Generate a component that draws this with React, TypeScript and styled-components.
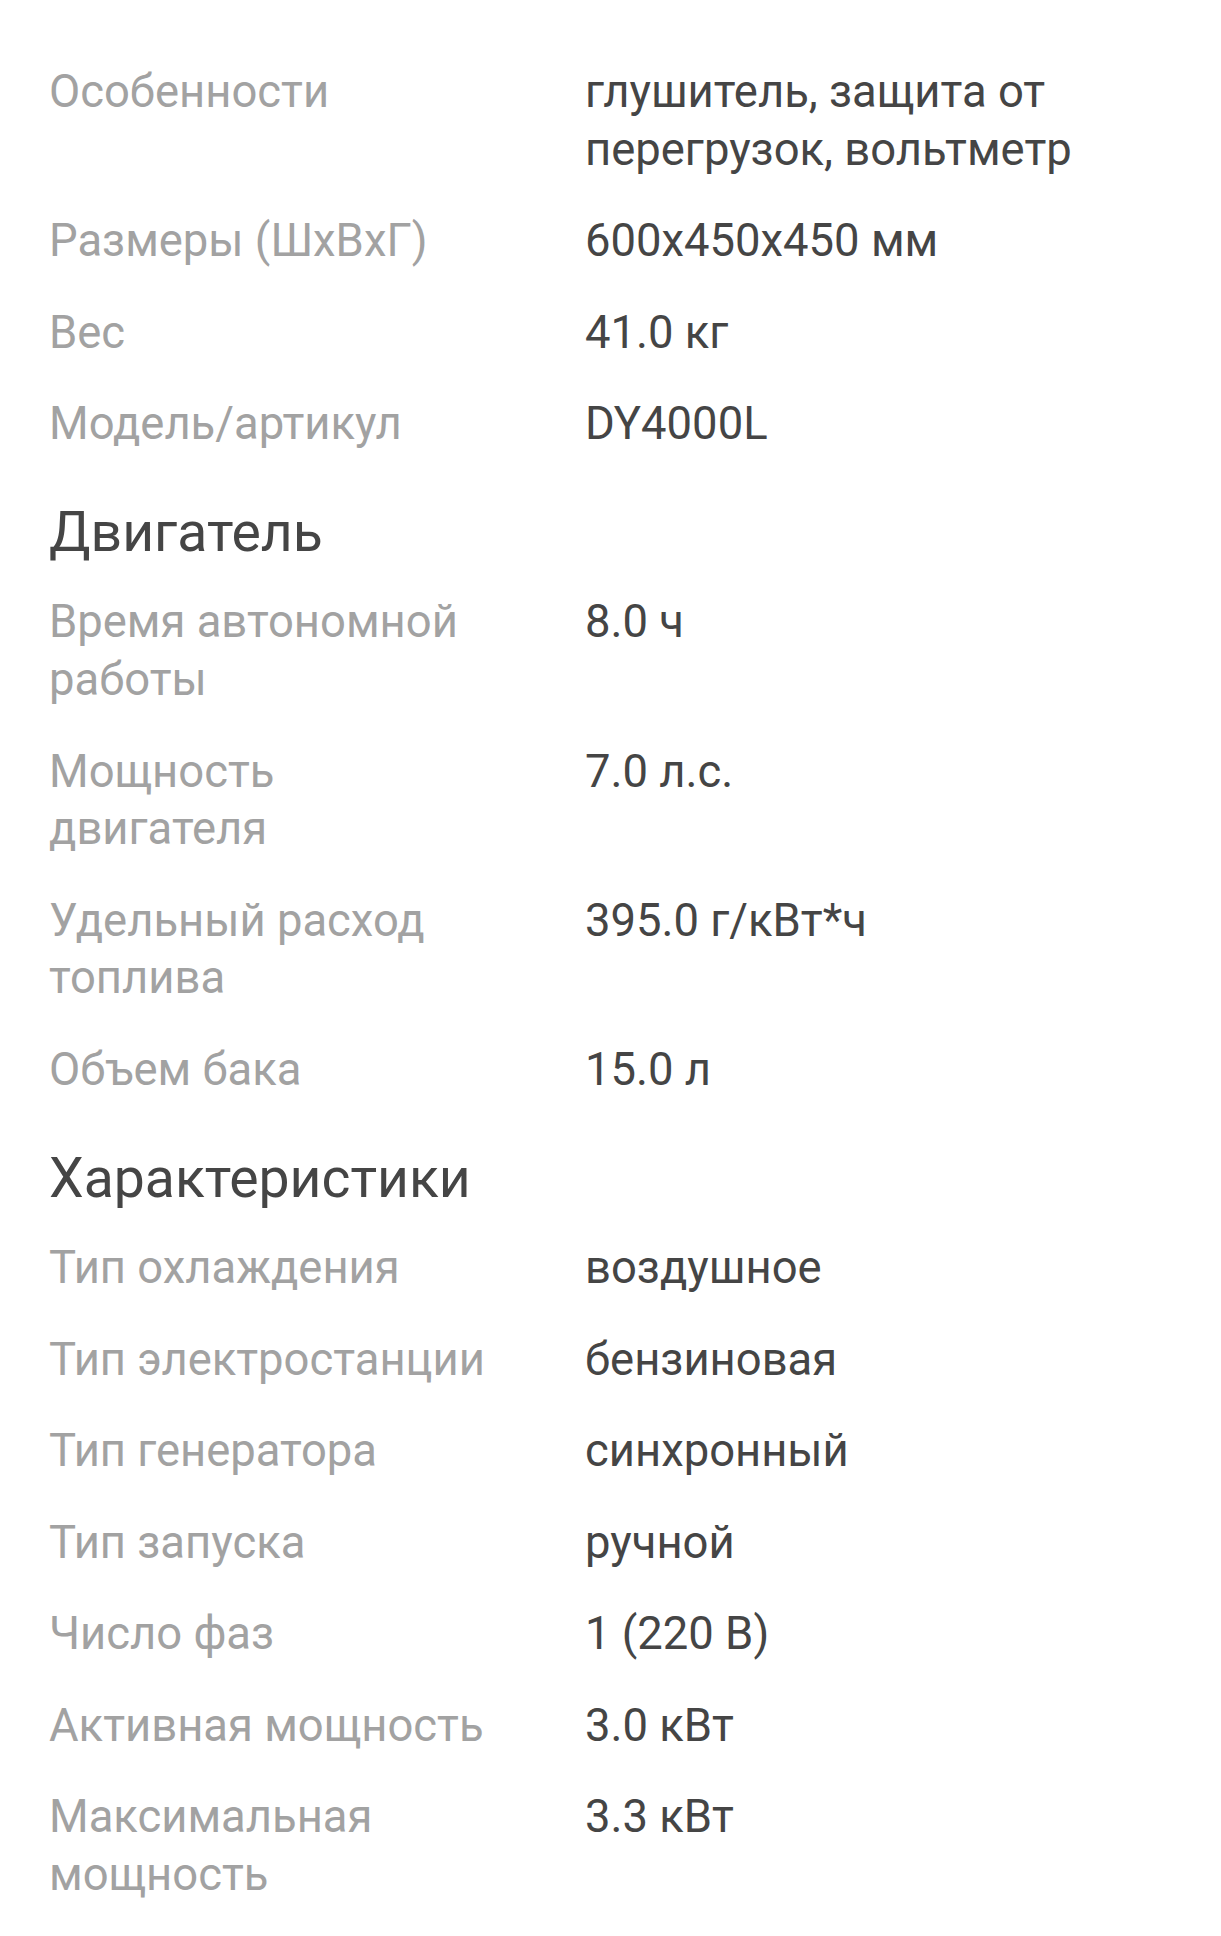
import React from "react";
import styled, { createGlobalStyle } from "styled-components";

const GlobalStyle = createGlobalStyle`
  html, body {
    margin: 0;
    padding: 0;
    background: #ffffff;
  }
  body {
    font-family: Roboto, "Noto Sans", Arial, sans-serif;
    -webkit-font-smoothing: antialiased;
  }
`;

const Page = styled.div`
  padding: 46px 49px 40px 49px;
  display: flex;
  flex-direction: column;
`;

const Section = styled.section`
  display: flex;
  flex-direction: column;
`;

const SectionTitle = styled.h2`
  margin: 29.5px 0 9.7px 0;
  font-size: 55.3px;
  line-height: 67.2px;
  font-weight: 400;
  color: #454545;
`;

const Row = styled.div`
  display: grid;
  grid-template-columns: 445px 1fr;
  column-gap: 91px;
  padding: 17px 0;
  font-size: 45.4px;
  line-height: 57.6px;
`;

const Label = styled.div`
  color: #a2a2a2;
`;

const Value = styled.div`
  color: #454545;
`;

type Spec = [string, string];

const sections: { title?: string; rows: Spec[] }[] = [
  {
    rows: [
      ["Особенности", "глушитель, защита от перегрузок, вольтметр"],
      ["Размеры (ШxВxГ)", "600x450x450 мм"],
      ["Вес", "41.0 кг"],
      ["Модель/артикул", "DY4000L"],
    ],
  },
  {
    title: "Двигатель",
    rows: [
      ["Время автономной работы", "8.0 ч"],
      ["Мощность двигателя", "7.0 л.с."],
      ["Удельный расход топлива", "395.0 г/кВт*ч"],
      ["Объем бака", "15.0 л"],
    ],
  },
  {
    title: "Характеристики",
    rows: [
      ["Тип охлаждения", "воздушное"],
      ["Тип электростанции", "бензиновая"],
      ["Тип генератора", "синхронный"],
      ["Тип запуска", "ручной"],
      ["Число фаз", "1 (220 В)"],
      ["Активная мощность", "3.0 кВт"],
      ["Максимальная мощность", "3.3 кВт"],
    ],
  },
];

export default function App() {
  return (
    <>
      <GlobalStyle />
      <Page>
        {sections.map((s, i) => (
          <Section key={i}>
            {s.title && <SectionTitle>{s.title}</SectionTitle>}
            {s.rows.map(([l, v]) => (
              <Row key={l}>
                <Label>{l}</Label>
                <Value>{v}</Value>
              </Row>
            ))}
          </Section>
        ))}
      </Page>
    </>
  );
}
